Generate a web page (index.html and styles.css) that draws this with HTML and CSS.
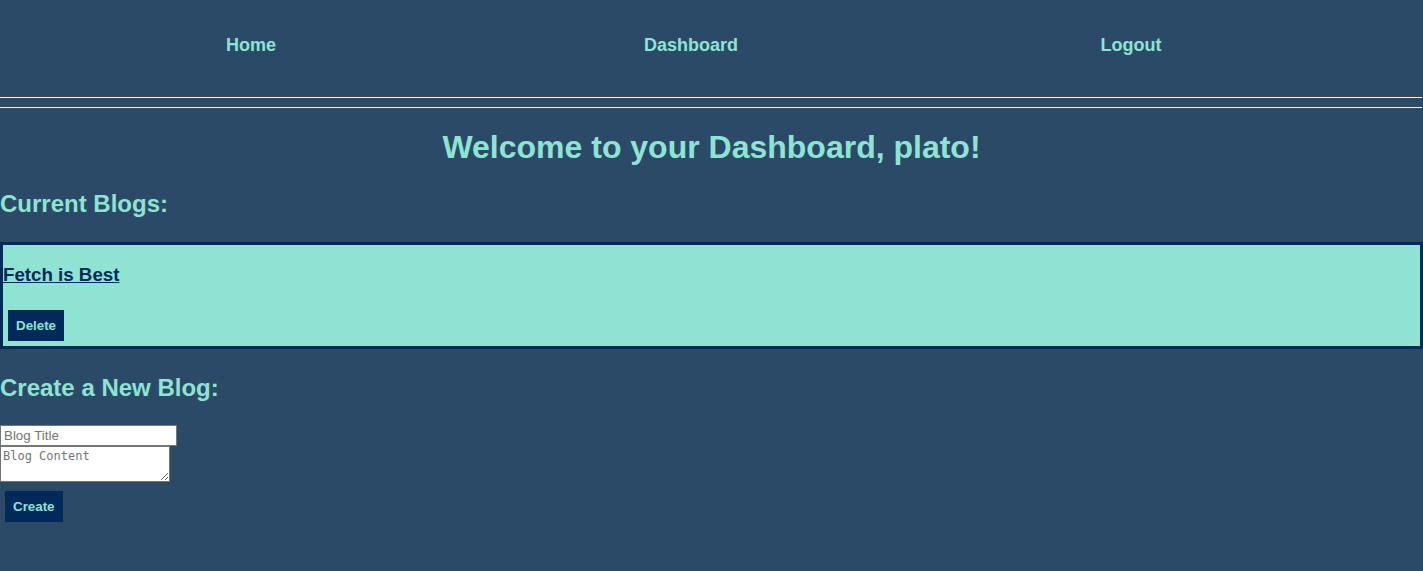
FILE: index.html
```html
<!DOCTYPE html>
<html>
<head>
<meta charset="utf-8">
<link rel="stylesheet" href="styles.css">
</head>
<body>
<header class="nav">
  <a class="nav-link" href="#">Home</a>
  <a class="nav-link" href="#">Dashboard</a>
  <a class="nav-link" href="#">Logout</a>
</header>
<hr class="rule">
<hr class="rule">
<h1 class="title">Welcome to your Dashboard, plato!</h1>
<h2 class="section">Current Blogs:</h2>
<div class="card">
  <h3 class="card-title"><a href="#">Fetch is Best</a></h3>
  <button class="btn">Delete</button>
</div>
<h2 class="section section-new">Create a New Blog:</h2>
<form class="form">
  <input class="field-title" type="text" placeholder="Blog Title">
  <textarea class="field-content" placeholder="Blog Content"></textarea>
  <button class="btn" type="button">Create</button>
</form>
</body>
</html>
```
FILE: styles.css
```css
html, body {
  margin: 0;
  background: #2b4a67;
}
body {
  font-family: "Liberation Sans", Arial, sans-serif;
  color: #8ee4d2;
}
.nav {
  display: grid;
  grid-template-columns: repeat(3, 440px);
  padding: 2px 0 0 31px;
  height: 86px;
  align-items: center;
}
.nav-link {
  text-align: center;
  color: #8ee4d2;
  font-weight: bold;
  font-size: 18px;
  text-decoration: none;
}
.rule {
  margin: 8px 0;
  border: 1px inset #c8c8c8;
  border-top-color: #9a9a9a;
  border-bottom-color: #eeeeee;
  border-left: 0;
  border-right: 0;
  height: 0;
  width: 1422px;
}
.title {
  text-align: center;
  font-size: 32px;
  margin: 21px 0 21px;
}
.section {
  font-size: 24px;
  margin: 24px 0 24px;
}
.section-new {
  margin-top: 25px;
  margin-bottom: 23px;
}
.card {
  display: flex;
  flex-direction: column;
  align-items: flex-start;
  background: #8fe3d2;
  border: 3px solid #012a5b;
}
.card-title {
  font-size: 18.72px;
  margin: 18.72px 0;
}
.card-title a {
  color: #012a5b;
}
.btn {
  margin: 6px 5px 5px;
  background: #012a5b;
  color: #8ee4d2;
  border: 0;
  font-family: "Liberation Sans", Arial, sans-serif;
  font-weight: bold;
  font-size: 13.33px;
  padding: 0 8px;
  height: 31px;
}
.form {
  display: flex;
  flex-direction: column;
  align-items: flex-start;
  margin: 0;
}
.form .btn {
  margin-top: 5px;
}
.field-title {
  box-sizing: border-box;
  width: 177px;
  height: 21px;
  margin: 0;
  border: 1px solid #767676;
  padding: 1px 3px;
  font-family: "Liberation Sans", Arial, sans-serif;
  font-size: 13.33px;
}
.field-content {
  box-sizing: border-box;
  width: 170px;
  height: 36px;
  margin: 0 0 4px;
  border: 1px solid #767676;
  padding: 2px 2px;
  font-family: "DejaVu Sans Mono", monospace;
  font-size: 12px;
}
```
